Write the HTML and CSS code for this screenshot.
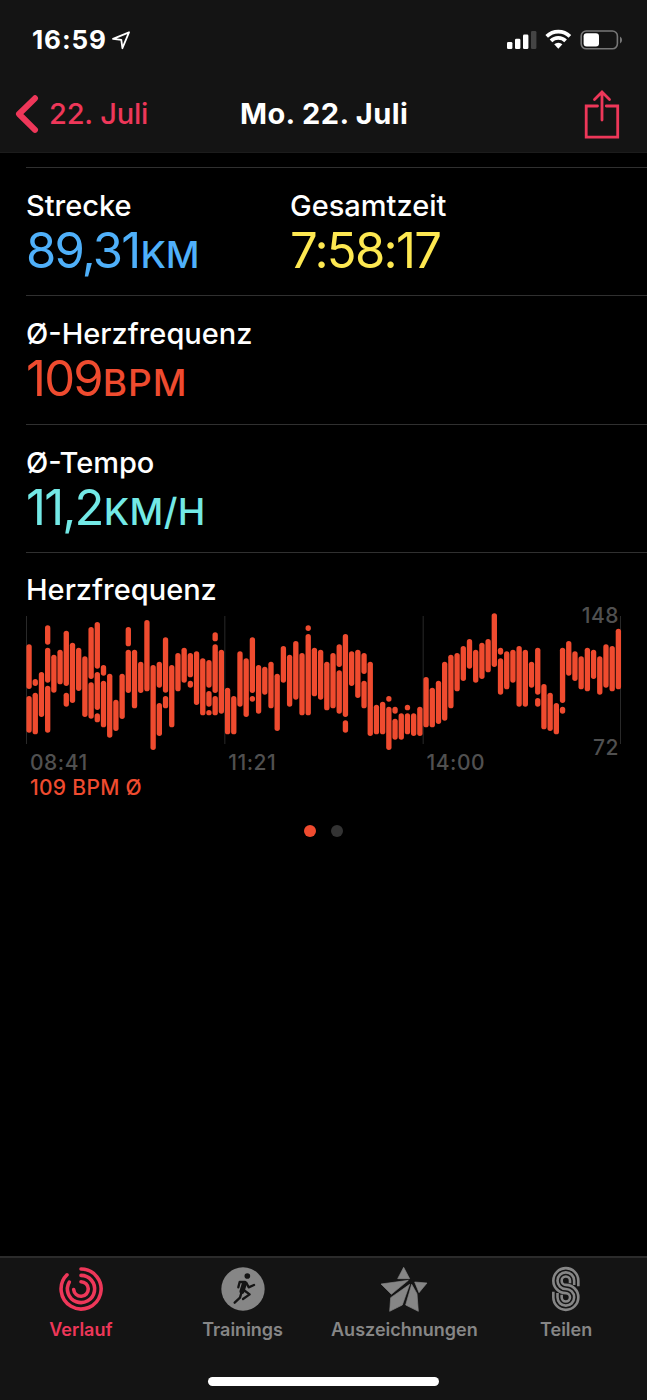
FILE: index.html
```html
<!DOCTYPE html>
<html lang="de">
<head>
<meta charset="utf-8">
<title>Mo. 22. Juli</title>
<link rel="stylesheet" href="styles.css">
</head>
<body>
<div class="app">
  <header class="top">
    <div class="status">
      <span class="clock">16:59</span>
      <svg class="location" width="20" height="20" viewBox="0 0 20 20"><path d="M2 8.9 18 2.3 11.4 18.2 10.3 9.9Z"/></svg>
      <svg class="indicators" width="116" height="22" viewBox="0 0 116 22">
        <g fill="#fff">
          <rect x="0" y="13" width="5.4" height="7" rx="1.3"/>
          <rect x="8" y="9.7" width="5.4" height="10.3" rx="1.3"/>
          <rect x="16" y="5.5" width="5.4" height="14.5" rx="1.3"/>
          <rect x="24" y="2" width="5.4" height="18" rx="1.3" fill="#444"/>
        </g>
        <g fill="none" stroke="#fff" stroke-width="3.7">
          <path d="M39.7 7.4a16.5 16.5 0 0 1 23.2 0"/>
          <path d="M44 11.9a10.3 10.3 0 0 1 14.6 0"/>
        </g>
        <path d="M47.2 15.3a5.9 5.9 0 0 1 8.2 0L51.3 19.7Z" fill="#fff"/>
        <rect x="74.2" y="2" width="36.2" height="17.8" rx="5" fill="none" stroke="#777" stroke-width="1.6"/>
        <rect x="76.6" y="4.3" width="15.4" height="13.2" rx="3" fill="#fff"/>
        <path d="M113 7.6q2.1 1.2 2.1 3.4t-2.1 3.4Z" fill="#777"/>
      </svg>
    </div>
    <nav class="nav">
      <a class="back">
        <svg width="24" height="38" viewBox="0 0 24 38"><path d="M20 3.3 4 19l16 15.8"/></svg>
        <span>22. Juli</span>
      </a>
      <h1 class="title">Mo. 22. Juli</h1>
      <svg class="share" width="36" height="50" viewBox="0 0 36 50"><path d="M13.5 17H2.2v31.200h31.500V17H22.300M18 31V4M10.500 10.400 18 3l7.500 7.400"/></svg>
    </nav>
  </header>

  <main class="content">
    <section class="row">
      <div class="metric">
        <h2 class="label">Strecke</h2>
        <p class="value distance">89,31<span class="unit">KM</span></p>
      </div>
      <div class="metric">
        <h2 class="label">Gesamtzeit</h2>
        <p class="value time">7:58:17</p>
      </div>
    </section>
    <section class="row">
      <div class="metric">
        <h2 class="label">Ø-Herzfrequenz</h2>
        <p class="value pulse">109<span class="unit">BPM</span></p>
      </div>
    </section>
    <section class="row">
      <div class="metric">
        <h2 class="label">Ø-Tempo</h2>
        <p class="value speed">11,2<span class="unit">KM/H</span></p>
      </div>
    </section>
    <section class="row chart-row">
      <h2 class="label">Herzfrequenz</h2>
      <div class="chart">
        <svg id="plot" width="621" height="150" viewBox="0 0 1863 450"></svg>
        <span class="limit max">148</span>
        <span class="limit min">72</span>
      </div>
      <div class="axis"><span>08:41</span><span>11:21</span><span>14:00</span></div>
      <p class="average">109 BPM Ø</p>
    </section>
    <div class="dots"><i class="dot active"></i><i class="dot"></i></div>
  </main>

  <footer class="tabs">
    <div class="tab-list">
      <a class="tab active">
        <svg width="46" height="46" viewBox="-23 -23 46 46"><g fill="none" stroke="currentColor" stroke-width="3.6" stroke-linecap="round"><path d="M0-20A20 20 0 1 1-14-14.2"/><path d="M0-13.6A13.6 13.6 0 1 1-11.7-6.9"/><path d="M0-7.3A7.3 7.3 0 1 1-7.3.6"/></g></svg>
        <span>Verlauf</span>
      </a>
      <a class="tab">
        <svg width="46" height="46" viewBox="-4 -4 138 138"><circle cx="65" cy="65" r="65" fill="currentColor"/><g fill="none" stroke="#141414" stroke-width="7" stroke-linecap="round" stroke-linejoin="round"><path d="M71 44H55L51 60M75 46l7 14 16-7M67 68l18 13-20 14M62 70l-6 21-16 15"/><path d="M69 49 62 72" stroke-width="15"/></g><circle cx="78" cy="26" r="8.5" fill="#141414"/></svg>
        <span>Trainings</span>
      </a>
      <a class="tab">
        <svg width="50" height="46" viewBox="-2 1 150 138"><g fill="currentColor" stroke="currentColor" stroke-width="2" stroke-linejoin="round"><path d="M72 5 90 39H54Z"/><path d="M4 55 86 44 35 86Z"/><path d="M105 49 142 52 118 81Z"/><path d="M90 56 68 118 30 137 33 96Z"/><path d="M96 56 112 84 116 137 78 118Z"/></g></svg>
        <span>Auszeichnungen</span>
      </a>
      <a class="tab">
        <svg width="30" height="46" viewBox="-3 -3 90 138"><g fill="none" stroke="currentColor" stroke-width="7.8"><path d="M79 58V41A37.5 37.5 0 0 0 4 41A37.5 37.5 0 0 0 41.5 78.5A12.5 12.5 0 0 1 54 91A12.5 12.5 0 0 1 29 91V83"/><path d="M66.5 54V41A25 25 0 0 0 16.5 41A25 25 0 0 0 41.5 66A25 25 0 0 1 66.5 91A25 25 0 0 1 16.5 91V78"/><path d="M54 49V41A12.5 12.5 0 0 0 29 41A12.5 12.5 0 0 0 41.5 53.5A37.5 37.5 0 0 1 79 91A37.5 37.5 0 0 1 4 91V74"/></g></svg>
        <span>Teilen</span>
      </a>
    </div>
    <div class="home"></div>
  </footer>
</div>
<script src="chart.js"></script>
</body>
</html>
```
FILE: styles.css
```css
* { box-sizing: border-box; margin: 0; padding: 0; }
body { background: #000; font-family: Inter, "Liberation Sans", sans-serif; color: #fff; }
.app { width: 647px; height: 1400px; display: flex; flex-direction: column; overflow: hidden; }
svg { display: block; flex: none; }

.top { height: 153px; background: #141414; border-bottom: 1px solid #1c1c1c; flex: none; }
.status { height: 77px; padding: 2px 24px 0 32px; display: flex; align-items: center; }
.clock { font-size: 26px; font-weight: 700; letter-spacing: 0.9px; width: 79px; white-space: nowrap; }
.location { fill: none; stroke: #fff; stroke-width: 1.8; stroke-linejoin: round; }
.indicators { margin-left: auto; }
.nav { height: 73px; padding: 0 27px 0 15px; display: grid; grid-template-columns: 225px 1fr 36px; align-items: center; }
.back { display: flex; align-items: center; gap: 10px; font-size: 29px; color: #ee3759; white-space: nowrap; }
.back svg { fill: none; stroke: currentColor; stroke-width: 6; stroke-linecap: round; stroke-linejoin: round; }
.back span { font-weight: 450; letter-spacing: -0.2px; }
.title { font-size: 29px; font-weight: 700; letter-spacing: 0.4px; white-space: nowrap; }
.share { fill: none; stroke: #ee3759; stroke-width: 2.8; stroke-linecap: round; }

.content { flex: 1; padding-top: 14px; }
.row { height: 128.3px; margin-left: 26px; padding-top: 20px; border-top: 1px solid #303030; display: grid; grid-template-columns: 264px 1fr; }
.label { font-size: 29px; line-height: 36px; font-weight: 550; white-space: nowrap; }
.value { font-size: 49px; line-height: 54px; font-weight: 400; letter-spacing: -1.8px; white-space: nowrap; }
.unit { font-size: 37px; letter-spacing: 0.4px; margin-left: 1px; font-weight: 450; }
.distance { color: #4fb0fa; }
.distance .unit { letter-spacing: -0.2px; }
.time { color: #fee851; letter-spacing: -1.7px; }
.pulse { color: #ef4b2f; }
.pulse .unit { letter-spacing: 0.9px; }
.speed { color: #73e9e6; }

.chart-row { display: block; height: auto; padding-top: 19.6px; }
.chart { position: relative; width: 621px; height: 141px; margin-top: -0.5px; }
.limit { position: absolute; right: 28px; font-size: 21px; line-height: 26px; font-weight: 500; letter-spacing: 0.5px; color: #505050; }
.max { top: -5px; }
.min { top: 127px; }
.axis { display: grid; grid-template-columns: repeat(3, 198.3px); padding: 1px 0 0 4px; font-size: 21px; line-height: 26px; font-weight: 500; letter-spacing: 0.5px; color: #505050; }
.average { padding-left: 4px; font-size: 21px; line-height: 24px; font-weight: 500; letter-spacing: 0.3px; color: #ef4b2f; }
.dots { display: flex; justify-content: center; gap: 15px; padding-top: 25px; }
.dot { width: 12px; height: 12px; border-radius: 50%; background: #333; }
.dot.active { background: #ef4b2f; }

.tabs { height: 144px; background: #141414; border-top: 2px solid #2b2b2b; flex: none; }
.tab-list { height: 119px; padding-top: 8px; display: grid; grid-template-columns: repeat(4, 1fr); }
.tab { display: flex; flex-direction: column; align-items: center; color: #868686; font-size: 18px; line-height: 22px; font-weight: 600; white-space: nowrap; }
.tab span { margin-top: 7px; }
.tab.active { color: #ee3759; }
.home { width: 231px; height: 9px; margin: 0 auto; border-radius: 5px; background: #fff; }
```
FILE: chart.js
```js
// Each entry is one time slot; pairs are the top and bottom of a bar segment.
const slots = `118-252,273-383 222-243,263-388 201-336 61-119,128-233,242-383 149-263 134-238 77-243,263-305 113-294
128-258 154-336 66-222,232-341 51-191,201-315,325-352 180-212,227-367 206-398 284-378 206-342
66-124,134-264 134-310 170-264 45-259 180-435 170-248,294-393 97-263,273-310 180-367
144-259 128-233 144-217,227-248 139-300 160-331 165-248,258-305,315-331 82-109,118-264,273-331 134-326
248-388 273-388 139-305 160-336 97-264,273-290 180-326 185-269 170-310
206-378 123-233 149-305 108-284 144-331 61-78,87-331 128-274 134-284
170-316 144-310 118-186,196-326 87-336,346-383 139-243 134-279 144-207,227-310 170-393
299-388 290-388 273-290,305-435 305-326,341-404 325-404 299-316,325-388 325-393 305-393
216-367 248-367 227-357 170-347 149-310 144-259 123-228 102-191
134-233 113-222 102-202 25-186 128-149,160-269 139-253 134-233 123-305
134-305 170-248 128-269,279-305 237-373 263-378 294-388 128-294,305-326 108-212
139-228 154-253 128-259 134-222 154-269 118-248 123-259 71-253`.trim().split(/\s+/);

const ns = "http://www.w3.org/2000/svg";
const plot = document.getElementById("plot");
function rect(x, y, width, height, rx, fill) {
  const el = document.createElementNS(ns, "rect");
  Object.entries({ x, y, width, height, rx, fill }).forEach(([k, v]) => el.setAttribute(k, v));
  plot.appendChild(el);
}
[0, 595, 1190, 1782].forEach(x => rect(x, 24, 3, 384, 0, "#292929"));
slots.forEach((slot, i) => slot.split(",").forEach(segment => {
  const [top, bottom] = segment.split("-").map(Number);
  rect(1.2 + i * 18.61, top - 9, 16, bottom - top, 8, "#ef4b2f");
}));
```
